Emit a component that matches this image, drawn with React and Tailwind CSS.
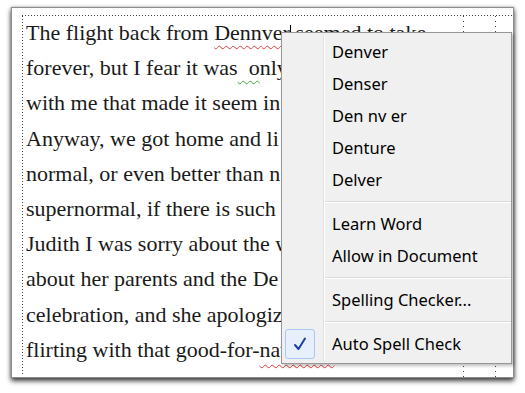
import React from "react";

const serif = { fontFamily: '"Liberation Serif", "Times New Roman", serif' };
const sans = { fontFamily: '"Noto Sans", "Open Sans", sans-serif' };

function MenuItem({ children, checked }) {
  return (
    <div className="relative h-[32px] flex items-center pl-[50px] text-[16.5px] text-black">
      {checked && (
        <div className="absolute left-[3px] top-px w-[30px] h-[30px] rounded-[3px] border border-[#a8c8f0] bg-[#e6effb] flex items-center justify-center">
          <svg width="14" height="14" viewBox="0 0 14 14">
            <path d="M2 8 L5.5 12 L12 1.5" fill="none" stroke="#1d3ea6" strokeWidth="2" strokeLinejoin="round" strokeLinecap="round" />
          </svg>
        </div>
      )}
      <span>{children}</span>
    </div>
  );
}

function Sep() {
  return (
    <div className="h-[12px] flex flex-col justify-center pl-[42px]">
      <div className="h-px bg-[#d9d9d9]" />
      <div className="h-px bg-white" />
    </div>
  );
}

export default function App() {
  const lines = [
    "with me that made it seem in",
    "Anyway, we got home and li",
    "normal, or even better than n",
    "supernormal, if there is such",
    "Judith I was sorry about the w",
    "about her parents and the De",
    "celebration, and she apologiz",
  ];
  return (
    <div className="w-[525px] h-[393px] bg-white pt-[7px] pl-[11px] relative overflow-hidden">
      <div className="w-[503px] h-[371px] border border-[#8c8c8c] bg-white relative overflow-hidden shadow-[0_3px_5px_rgba(0,0,0,0.75),0_0_3px_rgba(0,0,0,0.25)]">
        <div className="ml-[10px] mt-[7px] flex flex-col">
          <div className="h-px w-full bg-[repeating-linear-gradient(90deg,#444_0_1px,transparent_1px_3px)]" />
          <div className="flex">
            <div className="w-px h-[360px] bg-[repeating-linear-gradient(180deg,#444_0_1px,transparent_1px_3px)]" />
            <div className="pl-[3px] -mt-px text-[22px] leading-[35.2px] text-[#1a1a1a] whitespace-nowrap" style={serif}>
              <div>
                The flight back from{" "}
                <span className="relative underline decoration-wavy decoration-[#e23b3b] decoration-1 underline-offset-[5px]">
                  Denn
                  <span className="absolute left-full top-[5px] w-px h-[26px] bg-black" />
                  ver
                </span>{" "}
                seemed to take
              </div>
              <div>
                forever, but I fear it was
                <span className="underline decoration-wavy decoration-[#3aa63a] decoration-1 underline-offset-[5px]">{"\u00a0\u00a0o"}</span>
                nly
              </div>
              {lines.map((l, i) => (
                <div key={i}>{l}</div>
              ))}
              <div>
                flirting with that good-for-
                <span className="underline decoration-wavy decoration-[#e23b3b] decoration-1 underline-offset-[7px]">nawthin'</span>
              </div>
            </div>
          </div>
        </div>
        <div className="absolute left-[451px] top-[8px] bottom-0 w-px bg-[repeating-linear-gradient(180deg,#444_0_1px,transparent_1px_5px)]" />
        <div className="absolute left-[483px] top-[8px] bottom-0 w-px bg-[repeating-linear-gradient(180deg,#444_0_1px,transparent_1px_5px)]" />
      </div>

      <div
        className="absolute left-[281px] top-[32px] w-[231px] border border-[#979797] bg-[#f0f0f0] py-[3px] shadow-[2px_2px_3px_rgba(0,0,0,0.25)]"
        style={sans}
      >
        <div className="absolute left-[41px] top-[2px] bottom-[2px] w-px bg-[#e0e0e0]" />
        <div className="absolute left-[42px] top-[2px] bottom-[2px] w-px bg-white" />
        <MenuItem>Denver</MenuItem>
        <MenuItem>Denser</MenuItem>
        <MenuItem>Den nv er</MenuItem>
        <MenuItem>Denture</MenuItem>
        <MenuItem>Delver</MenuItem>
        <Sep />
        <MenuItem>Learn Word</MenuItem>
        <MenuItem>Allow in Document</MenuItem>
        <Sep />
        <MenuItem>Spelling Checker...</MenuItem>
        <Sep />
        <MenuItem checked>Auto Spell Check</MenuItem>
      </div>
    </div>
  );
}
